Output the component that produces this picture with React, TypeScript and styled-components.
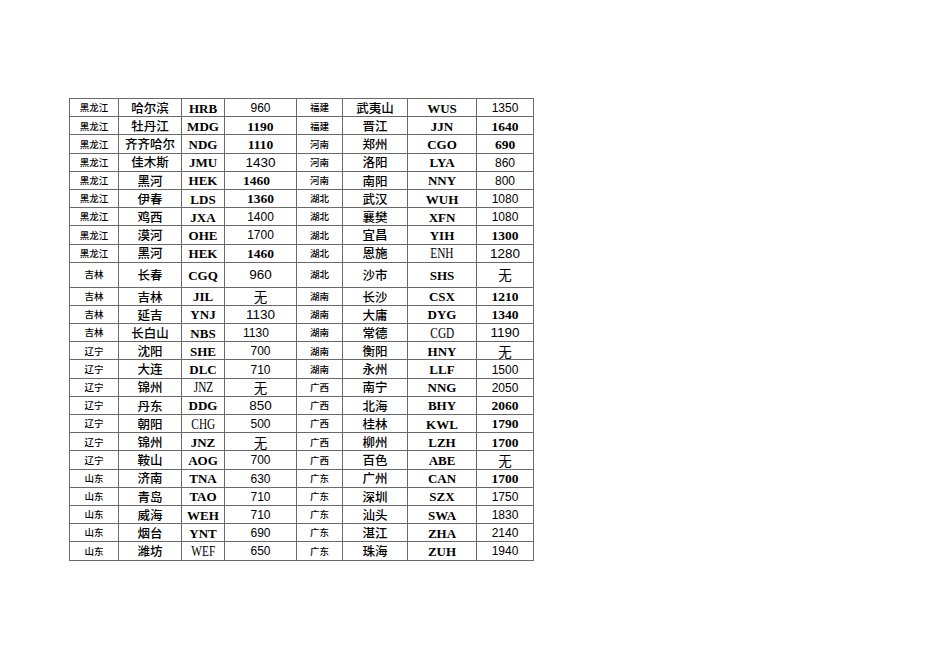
import React from 'react';
import styled, { createGlobalStyle } from 'styled-components';

const GlobalStyle = createGlobalStyle`
  html, body {
    margin: 0;
    padding: 0;
    background: #fff;
  }
`;

type CodeKind = 'b' | 'n';
type NumKind = 'b' | 'r' | 'l' | 'w';

interface Half {
  prov: string;
  city: string;
  code: string;
  codeKind: CodeKind;
  num: string;
  numKind: NumKind;
  shift?: boolean;
}

const h = (
  prov: string,
  city: string,
  code: string,
  codeKind: CodeKind,
  num: string,
  numKind: NumKind,
  shift = false,
): Half => ({ prov, city, code, codeKind, num, numKind, shift });

const rows: [Half, Half, boolean?][] = [
  [h('黑龙江', '哈尔滨', 'HRB', 'b', '960', 'r'), h('福建', '武夷山', 'WUS', 'b', '1350', 'r')],
  [h('黑龙江', '牡丹江', 'MDG', 'b', '1190', 'b'), h('福建', '晋江', 'JJN', 'b', '1640', 'b')],
  [h('黑龙江', '齐齐哈尔', 'NDG', 'b', '1110', 'b'), h('河南', '郑州', 'CGO', 'b', '690', 'b')],
  [h('黑龙江', '佳木斯', 'JMU', 'b', '1430', 'l'), h('河南', '洛阳', 'LYA', 'b', '860', 'r')],
  [h('黑龙江', '黑河', 'HEK', 'b', '1460', 'b', true), h('河南', '南阳', 'NNY', 'b', '800', 'r')],
  [h('黑龙江', '伊春', 'LDS', 'b', '1360', 'b'), h('湖北', '武汉', 'WUH', 'b', '1080', 'r')],
  [h('黑龙江', '鸡西', 'JXA', 'b', '1400', 'r'), h('湖北', '襄樊', 'XFN', 'b', '1080', 'r')],
  [h('黑龙江', '漠河', 'OHE', 'b', '1700', 'r'), h('湖北', '宜昌', 'YIH', 'b', '1300', 'b')],
  [h('黑龙江', '黑河', 'HEK', 'b', '1460', 'b'), h('湖北', '恩施', 'ENH', 'n', '1280', 'l')],
  [h('吉林', '长春', 'CGQ', 'b', '960', 'l'), h('湖北', '沙市', 'SHS', 'b', '无', 'w'), true],
  [h('吉林', '吉林', 'JIL', 'b', '无', 'w'), h('湖南', '长沙', 'CSX', 'b', '1210', 'b')],
  [h('吉林', '延吉', 'YNJ', 'b', '1130', 'l'), h('湖南', '大庸', 'DYG', 'b', '1340', 'b')],
  [h('吉林', '长白山', 'NBS', 'b', '1130', 'r', true), h('湖南', '常德', 'CGD', 'n', '1190', 'l')],
  [h('辽宁', '沈阳', 'SHE', 'b', '700', 'r'), h('湖南', '衡阳', 'HNY', 'b', '无', 'w')],
  [h('辽宁', '大连', 'DLC', 'b', '710', 'r'), h('湖南', '永州', 'LLF', 'b', '1500', 'r')],
  [h('辽宁', '锦州', 'JNZ', 'n', '无', 'w'), h('广西', '南宁', 'NNG', 'b', '2050', 'r')],
  [h('辽宁', '丹东', 'DDG', 'b', '850', 'l'), h('广西', '北海', 'BHY', 'b', '2060', 'b')],
  [h('辽宁', '朝阳', 'CHG', 'n', '500', 'r'), h('广西', '桂林', 'KWL', 'b', '1790', 'b')],
  [h('辽宁', '锦州', 'JNZ', 'b', '无', 'w'), h('广西', '柳州', 'LZH', 'b', '1700', 'b')],
  [h('辽宁', '鞍山', 'AOG', 'b', '700', 'r'), h('广西', '百色', 'ABE', 'b', '无', 'w')],
  [h('山东', '济南', 'TNA', 'b', '630', 'r'), h('广东', '广州', 'CAN', 'b', '1700', 'b')],
  [h('山东', '青岛', 'TAO', 'b', '710', 'r'), h('广东', '深圳', 'SZX', 'b', '1750', 'r')],
  [h('山东', '威海', 'WEH', 'b', '710', 'r'), h('广东', '汕头', 'SWA', 'b', '1830', 'r')],
  [h('山东', '烟台', 'YNT', 'b', '690', 'r'), h('广东', '湛江', 'ZHA', 'b', '2140', 'r')],
  [h('山东', '潍坊', 'WEF', 'n', '650', 'r'), h('广东', '珠海', 'ZUH', 'b', '1940', 'r')],
];

const widths = [49, 63, 43, 72, 46, 65, 69, 57];

const Page = styled.div`
  padding: 98px 0 0 69px;
  min-height: 672px;
  box-sizing: border-box;
`;

const Sheet = styled.table`
  border-collapse: collapse;
  table-layout: fixed;
  width: 464px;
  border: 1px solid #444;
`;

const Row = styled.tr<{ $tall?: boolean }>`
  height: ${p => (p.$tall ? 25 : 18.2)}px;
`;

const Cell = styled.td`
  border: 1px solid #6a6a6a;
  padding: 1px 0 0;
  text-align: center;
  vertical-align: middle;
  line-height: 1;
  color: #000;
  white-space: nowrap;
  overflow: hidden;
`;

const Prov = styled(Cell)`
  font-family: 'Noto Sans CJK SC', sans-serif;
  font-size: 9.5px;
  font-weight: 500;
`;

const City = styled(Cell)`
  font-family: 'Noto Sans CJK SC', sans-serif;
  font-size: 12.5px;
  font-weight: 500;
`;

const Code = styled(Cell)<{ $kind: CodeKind }>`
  font-family: 'Liberation Serif', 'Times New Roman', serif;
  font-weight: ${p => (p.$kind === 'b' ? 700 : 400)};
  font-size: ${p => (p.$kind === 'b' ? 13 : 14.5)}px;
`;

const Narrow = styled.span`
  display: inline-block;
  transform: scaleX(0.78);
`;

const Num = styled(Cell)<{ $kind: NumKind; $shift?: boolean }>`
  text-align: ${p => (p.$shift ? 'left' : 'center')};
  padding-left: ${p => (p.$shift ? 18 : 0)}px;
  font-family: ${p =>
    p.$kind === 'b'
      ? "'Liberation Serif', serif"
      : p.$kind === 'w'
        ? "'Noto Sans CJK SC', sans-serif"
        : "'Liberation Sans', Arial, sans-serif"};
  font-weight: ${p => (p.$kind === 'b' ? 700 : 400)};
  font-size: ${p => (p.$kind === 'r' ? 12 : 13.5)}px;
`;

const HalfCells: React.FC<{ d: Half }> = ({ d }) => (
  <>
    <Prov>{d.prov}</Prov>
    <City>{d.city}</City>
    <Code $kind={d.codeKind}>
      {d.codeKind === 'n' ? <Narrow>{d.code}</Narrow> : d.code}
    </Code>
    <Num $kind={d.numKind} $shift={d.shift}>
      {d.num}
    </Num>
  </>
);

export default function App() {
  return (
    <Page>
      <GlobalStyle />
      <Sheet>
        <colgroup>
          {widths.map((w, i) => (
            <col key={i} style={{ width: w }} />
          ))}
        </colgroup>
        <tbody>
          {rows.map(([a, b, tall], i) => (
            <Row key={i} $tall={tall}>
              <HalfCells d={a} />
              <HalfCells d={b} />
            </Row>
          ))}
        </tbody>
      </Sheet>
    </Page>
  );
}
